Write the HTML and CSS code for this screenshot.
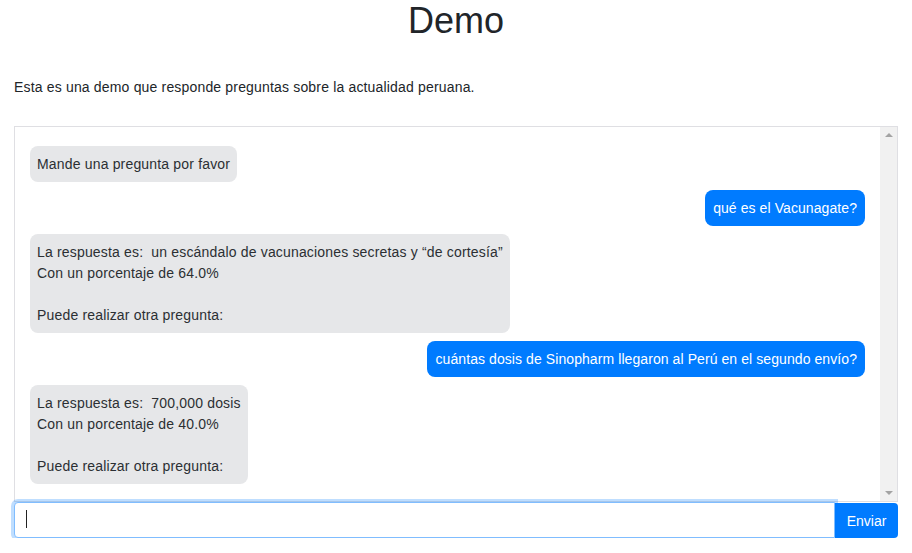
FILE: index.html
```html
<!DOCTYPE html>
<html lang="es">
<head>
<meta charset="utf-8">
<title>Demo</title>
<link rel="stylesheet" href="styles.css">
</head>
<body>
<h1 class="title">Demo</h1>
<p class="intro">Esta es una demo que responde preguntas sobre la actualidad peruana.</p>
<div class="chat">
  <div class="messages">
    <div class="msg bot">Mande una pregunta por favor</div>
    <div class="msg user">qué es el Vacunagate?</div>
    <div class="msg bot">La respuesta es:  un escándalo de vacunaciones secretas y “de cortesía”
Con un porcentaje de 64.0%

Puede realizar otra pregunta:</div>
    <div class="msg user">cuántas dosis de Sinopharm llegaron al Perú en el segundo envío?</div>
    <div class="msg bot">La respuesta es:  700,000 dosis
Con un porcentaje de 40.0%

Puede realizar otra pregunta:</div>
  </div>
  <div class="scrollbar">
    <span class="arrow up"></span>
    <span class="arrow down"></span>
  </div>
</div>
<form class="composer">
  <div class="field">
    <input class="input" type="text" aria-label="Pregunta">
    <span class="caret"></span>
  </div>
  <button class="send" type="button">Enviar</button>
</form>
</body>
</html>
```

FILE: styles.css
```css
* { box-sizing: border-box; }
html, body { margin: 0; }
body {
  padding: 0 14px;
  font-family: "Liberation Sans", Arial, sans-serif;
  font-size: 14px;
  color: #212529;
  background: #fff;
}
.title {
  margin: 0;
  padding-top: 0;
  height: 44px;
  line-height: 42px;
  text-align: center;
  font-weight: 400;
  font-size: 36px;
}
.intro {
  margin: 0;
  padding-top: 33px;
  height: 82px;
  line-height: 20px;
  letter-spacing: 0.17px;
}
.chat {
  display: flex;
  height: 376px;
  border: 1px solid #dfdfe3;
}
.messages {
  flex: 1;
  display: flex;
  flex-direction: column;
  gap: 8px;
  padding: 19px 15px 0 15px;
}
.msg {
  max-width: 80%;
  padding: 7.5px 7px;
  line-height: 21px;
  border-radius: 8px;
  white-space: pre-wrap;
  letter-spacing: 0.17px;
}
.bot {
  align-self: flex-start;
  background: #e6e7e9;
  color: #2b2f33;
}
.user {
  align-self: flex-end;
  background: #007bff;
  color: #fff;
  padding-left: 8px;
  padding-right: 8px;
  letter-spacing: 0.08px;
}
.scrollbar {
  width: 17px;
  background: #f1f1f1;
  display: flex;
  flex-direction: column;
  justify-content: space-between;
  align-items: center;
  padding: 6px 0;
}
.arrow {
  width: 0;
  height: 0;
  border-left: 4px solid transparent;
  border-right: 4px solid transparent;
}
.arrow.up { border-bottom: 4px solid #a3a3a3; }
.arrow.down { border-top: 4px solid #a3a3a3; }
.composer {
  display: flex;
  margin-top: 0;
}
.field {
  position: relative;
  flex: 1;
}
.input {
  display: block;
  width: 100%;
  height: 36px;
  margin: 0;
  padding: 0 10px;
  font: inherit;
  border: 1px solid #80bdff;
  border-radius: 4px 0 0 4px;
  box-shadow: 0 0 0 3px rgba(0, 123, 255, 0.25);
  outline: none;
}
.caret {
  position: absolute;
  left: 12px;
  top: 8px;
  width: 1px;
  height: 18px;
  background: #222;
}
.send {
  width: 63px;
  height: 35px;
  margin-top: 1px;
  border: none;
  border-radius: 0 4px 4px 0;
  background: #007bff;
  color: #fff;
  font: inherit;
  font-size: 14px;
  padding: 0;
}
```
